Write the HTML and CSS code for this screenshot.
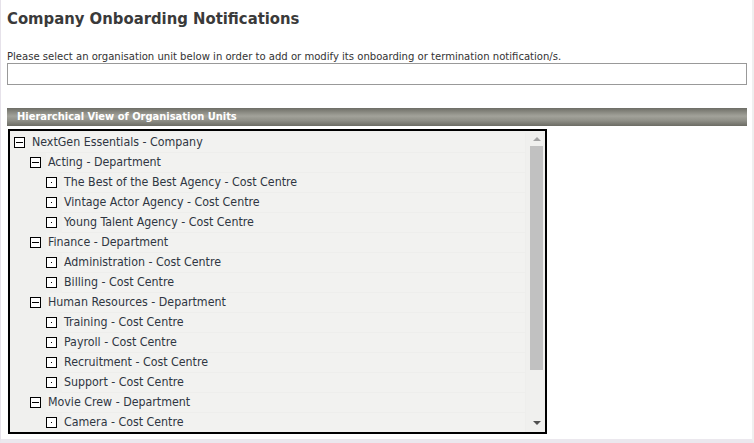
FILE: index.html
```html
<!DOCTYPE html>
<html lang="en">
<head>
  <meta charset="UTF-8">
  <title>Company Onboarding Notifications</title>
  <link rel="stylesheet" href="styles.css">
</head>
<body>
  <div class="page">
    <h1 class="page__title">Company Onboarding Notifications</h1>
    <p class="page__intro">Please select an organisation unit below in order to add or modify its onboarding or termination notification/s.</p>
    <div class="page__field"></div>

    <div class="section-bar">Hierarchical View of Organisation Units</div>

    <div class="tree">
      <ul class="tree__list">
        <li class="tree__row tree__row--l0"><span class="tree__toggle tree__toggle--open"></span><span class="tree__label">NextGen Essentials - Company</span></li>
        <li class="tree__row tree__row--l1"><span class="tree__toggle tree__toggle--open"></span><span class="tree__label">Acting - Department</span></li>
        <li class="tree__row tree__row--l2"><span class="tree__toggle tree__toggle--leaf"></span><span class="tree__label">The Best of the Best Agency - Cost Centre</span></li>
        <li class="tree__row tree__row--l2"><span class="tree__toggle tree__toggle--leaf"></span><span class="tree__label">Vintage Actor Agency - Cost Centre</span></li>
        <li class="tree__row tree__row--l2"><span class="tree__toggle tree__toggle--leaf"></span><span class="tree__label">Young Talent Agency - Cost Centre</span></li>
        <li class="tree__row tree__row--l1"><span class="tree__toggle tree__toggle--open"></span><span class="tree__label">Finance - Department</span></li>
        <li class="tree__row tree__row--l2"><span class="tree__toggle tree__toggle--leaf"></span><span class="tree__label">Administration - Cost Centre</span></li>
        <li class="tree__row tree__row--l2"><span class="tree__toggle tree__toggle--leaf"></span><span class="tree__label">Billing - Cost Centre</span></li>
        <li class="tree__row tree__row--l1"><span class="tree__toggle tree__toggle--open"></span><span class="tree__label">Human Resources - Department</span></li>
        <li class="tree__row tree__row--l2"><span class="tree__toggle tree__toggle--leaf"></span><span class="tree__label">Training - Cost Centre</span></li>
        <li class="tree__row tree__row--l2"><span class="tree__toggle tree__toggle--leaf"></span><span class="tree__label">Payroll - Cost Centre</span></li>
        <li class="tree__row tree__row--l2"><span class="tree__toggle tree__toggle--leaf"></span><span class="tree__label">Recruitment - Cost Centre</span></li>
        <li class="tree__row tree__row--l2"><span class="tree__toggle tree__toggle--leaf"></span><span class="tree__label">Support - Cost Centre</span></li>
        <li class="tree__row tree__row--l1"><span class="tree__toggle tree__toggle--open"></span><span class="tree__label">Movie Crew - Department</span></li>
        <li class="tree__row tree__row--l2"><span class="tree__toggle tree__toggle--leaf"></span><span class="tree__label">Camera - Cost Centre</span></li>
      </ul>
      <div class="scrollbar">
        <span class="scrollbar__arrow scrollbar__arrow--up"></span>
        <span class="scrollbar__thumb"></span>
        <span class="scrollbar__arrow scrollbar__arrow--down"></span>
      </div>
    </div>
  </div>
</body>
</html>
```

FILE: styles.css
```css
html, body {
  margin: 0;
  padding: 0;
  background: #fff;
}

body {
  font-family: "DejaVu Sans", Verdana, sans-serif;
  font-stretch: condensed;
  color: #333;
}

.page {
  box-sizing: border-box;
  width: 754px;
  height: 443px;
  padding: 0 5px 0 6px;
  border-left: 1px solid #e6e2ea;
  border-right: 2px solid #efefef;
  border-bottom: 4px solid #ebe8ee;
  overflow: hidden;
}

.page__title {
  margin: 0;
  padding-top: 8px;
  height: 30px;
  font-size: 16.5px;
  line-height: 22px;
  font-weight: bold;
  color: #3a3a3a;
}

.page__intro {
  margin: 13px 0 0;
  font-size: 11.2px;
  line-height: 12px;
  color: #333;
}

.page__field {
  height: 20px;
  border: 1px solid #999;
  background: #fff;
}

.section-bar {
  margin-top: 23px;
  height: 18px;
  padding-left: 10px;
  font-size: 11px;
  line-height: 18px;
  font-weight: bold;
  color: #fff;
  background: linear-gradient(#6d6d66 0%, #8c8c84 25%, #a2a29a 45%, #8f8f87 70%, #6c6c64 100%);
}

.tree {
  display: flex;
  width: 535px;
  height: 301px;
  margin: 3px 0 0 1px;
  border: 2px solid #000;
  background: #f0f0ee;
  overflow: hidden;
}

.tree__list {
  flex: 1;
  margin: 0;
  padding: 2px 0 0;
  list-style: none;
}

.tree__row {
  display: flex;
  align-items: center;
  height: 20px;
  font-size: 12.3px;
  color: #2f3642;
}

.tree__row--l0 { padding-left: 4px; }
.tree__row--l1 { padding-left: 20px; }
.tree__row--l2 { padding-left: 36px; }

.tree__toggle {
  position: relative;
  box-sizing: border-box;
  flex: none;
  width: 11px;
  height: 11px;
  margin-top: -1px;
  border: 1px solid #000;
  background: #fff;
}

.tree__toggle--open::after {
  content: "";
  position: absolute;
  left: 1px;
  top: 4px;
  width: 7px;
  height: 1px;
  background: #000;
}

.tree__toggle--leaf::after {
  content: "";
  position: absolute;
  left: 4px;
  top: 4px;
  width: 1px;
  height: 1px;
  background: #000;
}

.tree__label {
  box-sizing: border-box;
  flex: 1;
  height: 20px;
  margin-left: 5px;
  padding-left: 2px;
  line-height: 19px;
  white-space: nowrap;
  border-bottom: 1px solid #eeeeec;
  border-right: 1px solid #eeeeec;
  background: #f2f2f0;
}

.scrollbar {
  display: flex;
  flex-direction: column;
  align-items: center;
  flex: none;
  width: 13px;
  margin: 0 2px 0 4px;
}

.scrollbar__arrow {
  width: 0;
  height: 0;
  border-left: 4px solid transparent;
  border-right: 4px solid transparent;
}

.scrollbar__arrow--up {
  margin-top: 6px;
  border-bottom: 4px solid #a3a3a3;
}

.scrollbar__arrow--down {
  margin-top: auto;
  margin-bottom: 7px;
  border-top: 4px solid #505050;
}

.scrollbar__thumb {
  width: 13px;
  height: 224px;
  margin-top: 5px;
  background: #c1c1c1;
}
```
